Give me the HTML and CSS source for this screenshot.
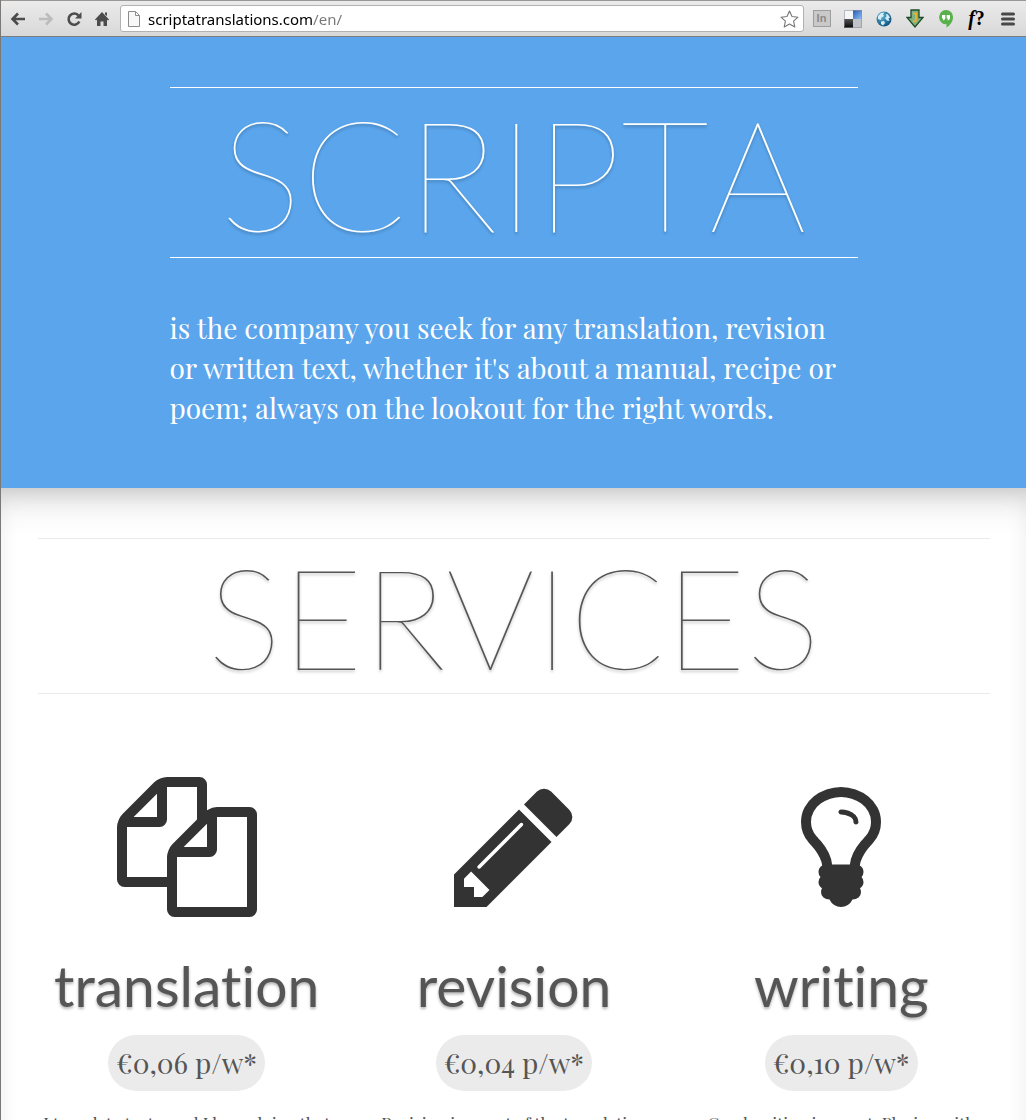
FILE: index.html
```html
<!DOCTYPE html>
<html lang="en">
<head>
<meta charset="utf-8">
<title>Scripta</title>
<link rel="stylesheet" href="styles.css">
</head>
<body>
<div class="window">
  <nav class="toolbar" aria-label="Browser toolbar">
    <div class="nav-buttons">
      <button class="tool" type="button" aria-label="Back">
        <svg width="16" height="16" viewBox="0 0 16 16"><path d="M15 8H3M8 2.500L2.500 8L8 13.500" fill="none" stroke="#4c4c4c" stroke-width="2.600"/></svg>
      </button>
      <button class="tool" type="button" aria-label="Forward" disabled>
        <svg width="16" height="16" viewBox="0 0 16 16"><path d="M1 8H13M8 2.500L13.500 8L8 13.500" fill="none" stroke="#bcbcbc" stroke-width="2.600"/></svg>
      </button>
      <button class="tool" type="button" aria-label="Reload">
        <svg width="16" height="16" viewBox="0 0 16 16"><path d="M12.300 4.300A5.600 5.600 0 1 0 13.300 10.500" fill="none" stroke="#4c4c4c" stroke-width="2.600"/><path d="M15.500 1V7.500H9Z" fill="#4c4c4c"/></svg>
      </button>
      <button class="tool" type="button" aria-label="Home">
        <svg width="16" height="16" viewBox="0 0 16 16"><path d="M8 1L15 8.500L14 9.500L13 8.600V15H9.500V10.500H6.500V15H3V8.600L2 9.500L1 8.500ZM11 1.500H13V5L11 3.500Z" fill="#4c4c4c"/></svg>
      </button>
    </div>
    <div class="address">
      <svg width="12" height="16" viewBox="0 0 12 16"><path d="M.5.500H7.500L11.500 4.500V15.500H.5ZM7.500.500V4.500H11.500" fill="#f8f8f8" stroke="#8c8c8c"/></svg>
      <input class="url" type="text" aria-label="Address" value="scriptatranslations.com/en/">
      <button class="tool" type="button" aria-label="Bookmark this page">
        <svg width="19" height="18" viewBox="0 0 19 18"><path d="M9.500 1L12 6.500L18 7.200L13.600 11.200L14.800 17L9.500 14.100L4.200 17L5.400 11.200L1 7.200L7 6.500Z" fill="#fff" stroke="#777" stroke-width="1.100" stroke-linejoin="round"/></svg>
      </button>
    </div>
    <div class="extensions">
      <button class="tool" type="button"><span class="badge-in">In</span></button>
      <button class="tool" type="button" aria-label="Delicious">
        <svg width="18" height="18" viewBox="0 0 18 18"><defs><linearGradient id="blue" x2="1" y2="1"><stop offset="0" stop-color="#2358b4"/><stop offset="1" stop-color="#8fc0f4"/></linearGradient><linearGradient id="black" x2="0" y2="1"><stop offset="0" stop-color="#555"/><stop offset="1" stop-color="#050505"/></linearGradient></defs><path d="M0 0H9V9H0Z" fill="#f4f5f8"/><path d="M9 0H18V9H9Z" fill="url(#blue)"/><path d="M0 9H9V18H0Z" fill="url(#black)"/><path d="M9 9H18V18H9Z" fill="#bfc3ca"/><path d="M.5.500H17.500V17.500H.5Z" fill="none" stroke="#8a9099" stroke-opacity=".6"/></svg>
      </button>
      <button class="tool" type="button" aria-label="Globe">
        <svg width="16" height="16" viewBox="0 0 16 16"><defs><radialGradient id="sea" cx=".35" cy=".3" r=".8"><stop offset="0" stop-color="#5fb4d6"/><stop offset="1" stop-color="#0b4a78"/></radialGradient></defs><circle cx="8" cy="8" r="7.500" fill="url(#sea)"/><path d="M2 5L5 2L8.500 1.500L7 3.500L8 5L5.500 6.500L5 9L2 8ZM10 3L12 3.500L14 6.500L12.500 7.500L13.500 10L11 9.500L9 7L10.500 5.500ZM5 10.500L8 10L9 12L7 14.500L5 13Z" fill="#d4eef7"/></svg>
      </button>
      <button class="tool" type="button" aria-label="Downloads">
        <svg width="18" height="19" viewBox="0 0 18 19"><path d="M5 1H13V8.500H17L9 18L1 8.500H5Z" fill="#7fb283" stroke="#1d4a27" stroke-width="1.300"/><path d="M7 4.500H11M10 4.500V11Q10 13 7 12.200" fill="none" stroke="#ffab1f" stroke-width="1.700"/></svg>
      </button>
      <button class="tool" type="button" aria-label="Hangouts">
        <svg width="16" height="18" viewBox="0 0 16 18"><path d="M8 0A7 7 0 0 1 15 7.200C15 11.500 12 15.500 8.500 17.500V14.300A7 7 0 0 1 8 0Z" fill="#58b14b"/><path d="M4 5H7.300V8.500Q7 10.200 5 10.500V8.500H4ZM8.700 5H12V8.500Q11.700 10.200 9.700 10.500V8.500H8.700Z" fill="#fff"/></svg>
      </button>
      <button class="tool tool-font" type="button"><i>f</i>?</button>
      <button class="tool" type="button" aria-label="Menu">
        <svg width="14" height="14" viewBox="0 0 14 14"><path d="M1.500 2H12.500M1.500 7H12.500M1.500 12H12.500" stroke="#484848" stroke-width="3" stroke-linecap="round"/></svg>
      </button>
    </div>
  </nav>

  <main class="page">
    <header class="intro">
      <div class="intro-inner">
        <h1 class="title">SCRIPTA</h1>
        <p class="lead">is the company you seek for any translation, revision or written text, whether it's about a manual, recipe or poem; always on the lookout for the right words.</p>
      </div>
    </header>

    <section class="services">
      <h2 class="services-title">SERVICES</h2>
      <div class="columns">
        <article class="service">
          <svg class="icon" viewBox="0 0 1792 1792" aria-hidden="true"><path d="M1696 384q40 0 68 28t28 68v1216q0 40-28 68t-68 28h-960q-40 0-68-28t-28-68v-288h-544q-40 0-68-28t-28-68v-672q0-40 20-88t48-76l408-408q28-28 76-48t88-20h416q40 0 68 28t28 68v328q68-40 128-40h416zm-544 213l-299 299h299v-299zm-640-384l-299 299h299v-299zm196 647l316-316v-416h-384v416q0 40-28 68t-68 28h-416v640h512v-256q0-40 20-88t48-76zm956 804v-1152h-384v416q0 40-28 68t-68 28h-416v640h896z"/></svg>
          <h3 class="name">translation</h3>
          <p class="price">€0,06 p/w*</p>
          <p class="text">I translate texts, and I keep doing that</p>
        </article>
        <article class="service">
          <svg class="icon" viewBox="0 0 1792 1792" aria-hidden="true"><path d="M491 1536l91-91-235-235-91 91v107h128v128h107zm523-928q0-22-22-22-10 0-17 7l-542 542q-7 7-7 17 0 22 22 22 10 0 17-7l542-542q7-7 7-17zm-54-192l416 416-832 832h-416v-416zm683 96q0 53-37 90l-166 166-416-416 166-165q36-38 90-38 53 0 91 38l235 234q37 39 37 91z"/></svg>
          <h3 class="name">revision</h3>
          <p class="price">€0,04 p/w*</p>
          <p class="text">Revision is a part of the translation</p>
        </article>
        <article class="service">
          <svg class="icon" viewBox="0 0 1792 1792" aria-hidden="true"><path d="M1120 576q0 13-9.500 22.500t-22.500 9.500-22.500-9.500-9.500-22.500q0-46-54-71t-106-25q-13 0-22.500-9.500t-9.500-22.500 9.500-22.500 22.500-9.500q50 0 99.500 16t87 54 37.500 90zm160 0q0-72-34.500-134t-90-101.500-123-62-136.500-22.500-136.500 22.500-123 62-90 101.500-34.500 134q0 101 68 180 10 11 30.500 33t30.500 33q128 153 141 298h228q13-145 141-298 10-11 30.500-33t30.500-33q68-79 68-180zm128 0q0 155-103 268-45 49-74.500 87t-59.500 95.500-34 107.500q47 28 47 82 0 37-25 64 25 27 25 64 0 52-45 81 13 23 13 47 0 46-31.500 71t-77.500 25q-20 44-60 70t-87 26-87-26-60-70q-46 0-77.500-25t-31.500-71q0-24 13-47-45-29-45-81 0-37 25-64-25-27-25-64 0-54 47-82-4-50-34-107.500t-59.500-95.500-74.500-87q-103-113-103-268 0-99 44.500-184.500t117-142 164-89 186.500-32.500 186.500 32.500 164 89 117 142 44.500 184.500z"/></svg>
          <h3 class="name">writing</h3>
          <p class="price">€0,10 p/w*</p>
          <p class="text">Good writing is an art. Playing with</p>
        </article>
      </div>
    </section>
  </main>
</div>
</body>
</html>
```
FILE: styles.css
```css
* {
  box-sizing: border-box;
}

body {
  margin: 0;
  background: #fff;
  color: #555;
  font-family: "Playfair Display", "Liberation Serif", serif;
  font-variant-ligatures: none;
}

h1, h2, h3, p {
  margin: 0;
}

.window {
  display: flex;
  flex-direction: column;
  height: 100vh;
  overflow: hidden;
  border-left: 1px solid #7c7876;
}

/* Browser toolbar */

.toolbar {
  display: flex;
  flex: none;
  align-items: center;
  height: 37px;
  padding: 0 3px 0 9px;
  border-top: 1px solid #9a9795;
  border-bottom: 1px solid #7d7d7d;
  background: linear-gradient(#ebebeb, #d8d8d8);
}

.nav-buttons {
  display: flex;
  gap: 12px;
  padding-right: 10px;
}

.tool {
  display: flex;
  align-items: center;
  justify-content: center;
  padding: 0;
  border: 0;
  background: none;
}

.address {
  display: flex;
  flex: 1;
  align-items: center;
  gap: 8px;
  height: 27px;
  padding: 0 4px 0 7px;
  border: 1px solid #b2b2b2;
  border-radius: 3px;
  background: #fff;
}

.url {
  flex: 1;
  min-width: 0;
  padding: 0;
  border: 0;
  outline: 0;
  background: linear-gradient(90deg, #000 164px, #777 164px);
  background-clip: text;
  color: transparent;
  font: 15px/20px "Noto Sans", sans-serif;
}

.extensions {
  display: flex;
  align-items: center;
  padding-left: 2px;
}

.extensions .tool {
  width: 31px;
}

.badge-in {
  width: 18px;
  border: 1px solid #9d9d9d;
  background: #c9c9c9;
  color: #8b8b8b;
  font: bold 11px/15px "Liberation Sans", sans-serif;
}

.tool-font {
  color: #000;
  font: bold 20px "Liberation Serif", serif;
}

/* Page */

.page {
  flex: 1;
  min-height: 0;
  overflow: hidden;
}

.intro {
  position: relative;
  padding: 50px 24px 60px;
  background: #5aa5ec;
  box-shadow: 0 -20px 40px 20px rgba(0, 0, 0, .3);
  color: #fff;
}

.intro-inner {
  max-width: 688px;
  margin: 0 auto;
}

.title,
.services-title {
  font-family: Lato, sans-serif;
  font-weight: 100;
  font-kerning: none;
  text-align: center;
  text-shadow: 0 2px 3px rgba(0, 0, 0, .25);
}

.title {
  border-top: 1px solid #fff;
  border-bottom: 1px solid #fff;
  font-size: 154px;
  line-height: 169px;
}

.lead {
  margin-top: 50px;
  font-size: 28px;
  line-height: 40px;
}

.services {
  padding: 50px 36px 20px 37px;
  box-shadow: inset 0 0 20px rgba(0, 0, 0, .08);
}

.services-title {
  border-top: 1px solid #ebebeb;
  border-bottom: 1px solid #ebebeb;
  font-size: 140px;
  line-height: 154px;
}

.columns {
  display: grid;
  grid-template-columns: repeat(3, 1fr);
  gap: 30px;
  padding-top: 83px;
}

.service {
  display: flex;
  flex-direction: column;
  align-items: center;
  text-align: center;
}

.icon {
  width: 140px;
  height: 140px;
  fill: #333;
}

.name {
  margin-top: 33px;
  font-family: Lato, sans-serif;
  font-size: 57px;
  font-weight: 400;
  line-height: 70px;
  text-shadow: 0 2px 3px rgba(0, 0, 0, .3);
}

.price {
  margin-top: 15px;
  padding: 0 8px;
  border-radius: 28px;
  background: #ebebeb;
  font-size: 28px;
  line-height: 56px;
}

.text {
  margin-top: 18px;
  font-size: 17px;
  line-height: 28px;
}
```
